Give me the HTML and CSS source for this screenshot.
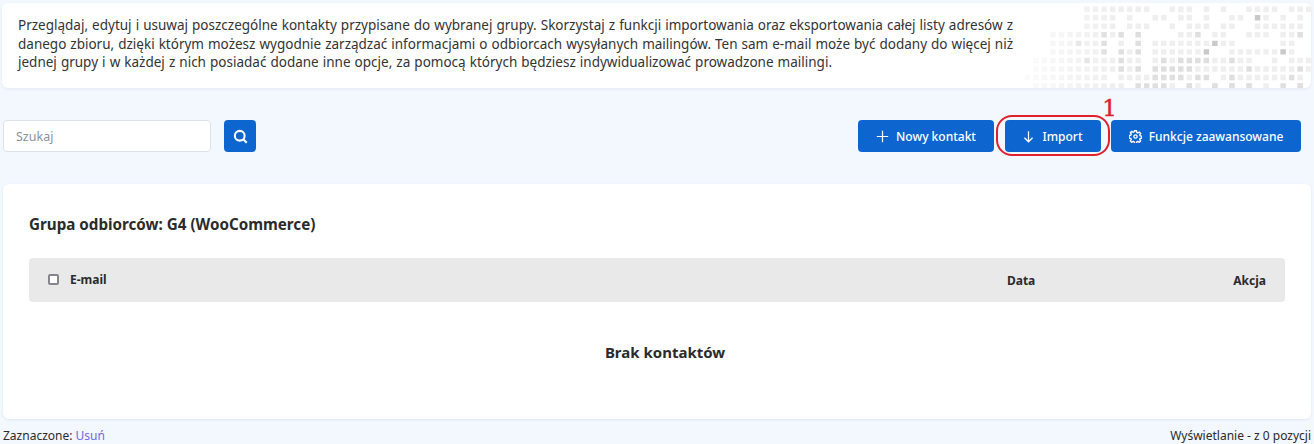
FILE: index.html
```html
<!DOCTYPE html>
<html lang="pl">
<head>
<meta charset="utf-8">
<title>Kontakty</title>
<link rel="stylesheet" href="styles.css">
</head>
<body>
<section class="intro">
  <svg class="dots" viewBox="-.5 -.5 33.76 9.77" aria-hidden="true">
    <path class="dot-l" d="M7 0h0m1 0h0m1 0h0m1 0h0m1 0h0m1 0h0m1 0h0m1 0h0m3 0h0m1 0h0m1 0h0m2 0h0m2 0h0m3 0h0m1 0h0m1 0h0m1 0h0m2 0h0m1 0h0m1 0h0
    M7 1h0m1 0h0m1 0h0m1 0h0m2 0h0m3 0h0m1 0h0m2 0h0m1 0h0m2 0h0m3 0h0m1 0h0m3 0h0m2 0h0m2 0h0
    M7 2h0m1 0h0m1 0h0m1 0h0m2 0h0m1 0h0m1 0h0m3 0h0m2 0h0m1 0h0m1 0h0m2 0h0m1 0h0m3 0h0m1 0h0m1 0h0m1 0h0m1 0h0m1 0h0
    M3 3h0m1 0h0m1 0h0m1 0h0m1 0h0m1 0h0m2 0h0m8 0h0m1 0h0m3 0h0m1 0h0m3 0h0m1 0h0m1 0h0m2 0h0m1 0h0
    M3 4h0m1 0h0m1 0h0m2 0h0m1 0h0m3 0h0m4 0h0m1 0h0m1 0h0m1 0h0m1 0h0m1 0h0m1 0h0m2 0h0m1 0h0m6 0h0m1 0h0
    M3 5h0m1 0h0m1 0h0m1 0h0m1 0h0m1 0h0m4 0h0m3 0h0m1 0h0m1 0h0m1 0h0m1 0h0m1 0h0m4 0h0m1 0h0m1 0h0m1 0h0m1 0h0m1 0h0m2 0h0
    M1 6h0m1 0h0m1 0h0m1 0h0m1 0h0m1 0h0m2 0h0m1 0h0m1 0h0m2 0h0m1 0h0m2 0h0m2 0h0m5 0h0m1 0h0m2 0h0m1 0h0m3 0h0m2 0h0m1 0h0m1 0h0
    M1 7h0m1 0h0m1 0h0m1 0h0m1 0h0m1 0h0m1 0h0m1 0h0m1 0h0m1 0h0m2 0h0m8 0h0m1 0h0m1 0h0m1 0h0m1 0h0m1 0h0m2 0h0m1 0h0m1 0h0m1 0h0m1 0h0m2 0h0
    M0 8h0m1 0h0m1 0h0m1 0h0m1 0h0m1 0h0m1 0h0m1 0h0m1 0h0m1 0h0m2 0h0m1 0h0m1 0h0m1 0h0m5 0h0m4 0h0m2 0h0m1 0h0m1 0h0m1 0h0m1 0h0m1 0h0m2 0h0
    M1 9h0m1 0h0m1 0h0m1 0h0m1 0h0m1 0h0m1 0h0m1 0h0m1 0h0m1 0h0m1 0h0m6 0h0m2 0h0m1 0h0m2 0h0m2 0h0m2 0h0m2 0h0m4 0h0"/>
    <path class="dot-m" d="M9 3h0m2 0h0m2 0h0m7 0h0m12 0h0
    M6 4h0m3 0h0m4 0h0
    M9 5h0m2 0h0m2 0h0
    M7 6h0m4 0h0m5 0h0m2 0h0m1 0h0m1 0h0m1 0h0m3 0h0
    M11 7h0m2 0h0m2 0h0m1 0h0m1 0h0m1 0h0m1 0h0m7 0h0m6 0h0
    M15 8h0m1 0h0m1 0h0m1 0h0m2 0h0m1 0h0m3 0h0m7 0h0
    M13 9h0m1 0h0m1 0h0m1 0h0m3 0h0m3 0h0m2 0h0m2 0h0m4 0h0m2 0h0"/>
    <path class="dot-d" d="M27 1h0M22 4h0M21 5h0m9 0h0"/>
  </svg>
  <p class="intro-text">
    <span class="line">Przeglądaj, edytuj i usuwaj poszczególne kontakty przypisane do wybranej grupy. Skorzystaj z funkcji importowania oraz eksportowania całej listy adresów z</span>
    <span class="line">danego zbioru, dzięki którym możesz wygodnie zarządzać informacjami o odbiorcach wysyłanych mailingów. Ten sam e-mail może być dodany do więcej niż</span>
    <span class="line line-last">jednej grupy i w każdej z nich posiadać dodane inne opcje, za pomocą których będziesz indywidualizować prowadzone mailingi.</span>
  </p>
</section>

<section class="toolbar">
  <div class="search">
    <input class="search-input" type="text" placeholder="Szukaj">
    <button class="btn btn-icon" type="button" aria-label="Szukaj">
      <svg class="ico" viewBox="0 0 16 16"><circle cx="7.2" cy="7.2" r="5.2" class="ico-bold"/><path d="M11 11l3.6 3.6" class="ico-bold"/></svg>
    </button>
  </div>
  <div class="actions">
    <button class="btn btn-new" type="button">
      <svg class="ico" viewBox="0 0 16 16"><path d="M8 1v14M1 8h14"/></svg>Nowy kontakt
    </button>
    <span class="marked">
      <button class="btn btn-import" type="button">
        <svg class="ico" viewBox="0 0 16 16"><path d="M8 1.500v13M3 9.500l5 5 5-5"/></svg>Import
      </button>
      <span class="marker-ring"></span>
      <span class="marker-num">1</span>
    </span>
    <button class="btn btn-adv" type="button">
      <svg class="ico ico-gear" viewBox="0 0 16 16"><circle cx="8" cy="8" r="2"/><path d="M6.800 1h2.400l.4 2 1.300.6 1.800-1.100 1.600 1.700-1.100 1.700.6 1.300 2 .4v2.400l-2 .4-.6 1.300 1.100 1.800-1.700 1.600-1.700-1.100-1.300.6-.4 2H6.800l-.4-2-1.300-.6-1.800 1.100-1.600-1.700 1.100-1.700-.6-1.300-2-.4V6.800l2-.4.600-1.300L1.700 3.300l1.700-1.600 1.700 1.100 1.300-.6z"/></svg>Funkcje zaawansowane
    </button>
  </div>
</section>

<section class="panel">
  <h2 class="panel-title">Grupa odbiorców: G4 (WooCommerce)</h2>
  <div class="thead">
    <span class="check"></span>
    <span class="col-mail">E-mail</span>
    <span class="col-date">Data</span>
    <span class="col-act">Akcja</span>
  </div>
  <p class="empty">Brak kontaktów</p>
</section>

<footer class="foot">
  <span>Zaznaczone: <a class="link" href="#">Usuń</a></span>
  <span>Wyświetlanie - z 0 pozycji</span>
</footer>
</body>
</html>
```
FILE: styles.css
```css
* { box-sizing: border-box; }
html, body { margin: 0; height: 100%; }
body {
  background: #f3f7fe;
  color: #2b2b2b;
  font-family: "Noto Sans", "Open Sans", sans-serif;
  font-size: 12.5px;
  overflow: hidden;
}
.intro {
  position: relative;
  height: 85px;
  margin: 3px 3px 0 2px;
  padding: 13px 298px 0 16px;
  background: #fff;
  border-radius: 6px;
  box-shadow: 0 1px 3px rgba(30, 60, 120, .08);
  overflow: hidden;
}
.intro-text {
  position: relative;
  margin: 0;
  width: 995px;
  font-size: 13.5px;
  line-height: 18.7px;
  color: #333;
}
.line {
  display: block;
  text-align: justify;
  text-align-last: justify;
}
.line-last { width: 814px; }
.dots {
  position: absolute;
  right: 0;
  bottom: 0;
  width: 288px;
  height: 83.3px;
  fill: none;
  stroke-width: .64;
  stroke-linecap: square;
  -webkit-mask-image: linear-gradient(90deg, rgba(0,0,0,.25), #000 30%);
  mask-image: linear-gradient(90deg, rgba(0,0,0,.25), #000 30%);
}
.dot-l { stroke: #efefef; }
.dot-m { stroke: #dfdfdf; }
.dot-d { stroke: #c9c9c9; }

.toolbar {
  display: flex;
  justify-content: space-between;
  margin: 32px 13px 0 3px;
}
.search { display: flex; gap: 13px; }
.search-input {
  width: 208px;
  height: 32px;
  padding: 0 12px;
  border: 1px solid #dde2ea;
  border-radius: 4px;
  background: #fff;
  font: 12.5px "Noto Sans", sans-serif;
  color: #2b2b2b;
}
.search-input::placeholder { color: #8a929c; opacity: 1; }
.actions { display: flex; gap: 10px; }
.btn {
  display: inline-flex;
  align-items: center;
  justify-content: center;
  height: 32px;
  border: 0;
  border-radius: 4px;
  background: #0d66d0;
  color: #fff;
  font: 500 12px "Noto Sans", sans-serif;
  padding: 0;
}
.ico {
  width: 13px;
  height: 13px;
  fill: none;
  stroke: currentColor;
  stroke-width: 1.5;
  flex: none;
}
.ico-bold { stroke-width: 2.2; }
.ico-gear { stroke-width: 1.7; }
.btn-icon { width: 32px; }
.btn-icon .ico { width: 15px; height: 15px; }
.btn-new { width: 136px; gap: 7px; }
.btn-import { width: 96px; gap: 7px; padding-right: 1px; }
.btn-adv { width: 190px; gap: 7px; }
.marked { position: relative; display: block; margin-left: 1px; }
.marker-ring {
  position: absolute;
  left: -9px;
  right: -9px;
  top: -5px;
  bottom: -4px;
  border: 2px solid #e0202c;
  border-radius: 16px;
}
.marker-num {
  position: absolute;
  right: -16px;
  top: -25px;
  color: #e0202c;
  font: 400 23px/26px "DejaVu Serif", "Liberation Serif", serif;
  -webkit-text-stroke: .4px #e0202c;
}

.panel {
  height: 235px;
  margin: 32px 3px 0 3px;
  padding: 29px 26px 0;
  background: #fff;
  border-radius: 6px;
  box-shadow: 0 1px 3px rgba(30, 60, 120, .08);
}
.panel-title {
  margin: 0;
  font-size: 15.2px;
  line-height: 22px;
  font-weight: 700;
  color: #2b2b2b;
}
.thead {
  display: flex;
  align-items: center;
  height: 44px;
  margin-top: 23px;
  padding: 0 19px 0 19px;
  background: #e9e9e9;
  border-radius: 4px;
  font-weight: 700;
  font-size: 12px;
}
.check {
  width: 11px;
  height: 11px;
  margin-right: 11px;
  margin-top: -1px;
  background: #fff;
  border: 2px solid #85858f;
  border-radius: 2px;
}
.col-mail { flex: 1; margin-top: -2px; }
.col-date { margin-right: 198px; }
.empty {
  margin: 40px 0 0;
  padding-left: 16px;
  text-align: center;
  font-size: 15px;
  font-weight: 700;
  line-height: 20px;
}
.foot {
  display: flex;
  justify-content: space-between;
  margin: 8px 3px 0;
  font-size: 12px;
  line-height: 17px;
}
.link { color: #6f6be8; text-decoration: none; }
```
